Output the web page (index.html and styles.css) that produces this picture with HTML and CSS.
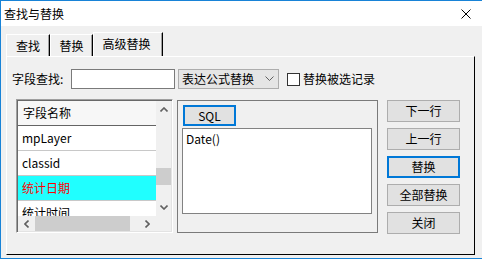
FILE: index.html
```html
<!DOCTYPE html>
<html>
<head>
    <title>查找与替换</title>
    <link rel="stylesheet" href="styles.css">
</head>
<body>
    <div class="window">
        <div class="titlebar">
            <span class="title">查找与替换</span>
            <svg class="close" width="10" height="10" viewBox="0 0 10 10">
                <path d="M0.5 0.5 L9.5 9.5 M9.5 0.5 L0.5 9.5" stroke="#000" stroke-width="1" fill="none"/>
            </svg>
        </div>
        <div class="client">
            <div class="tabs">
                <div class="tab tab-find">查找</div>
                <div class="tab tab-replace">替换</div>
                <div class="tab tab-adv active">高级替换</div>
            </div>
            <div class="panel">
                <div class="search-row">
                    <label class="search-label">字段查找:</label>
                    <div class="text-input"></div>
                    <div class="combo">
                        <span>表达公式替换</span>
                        <svg width="9" height="6" viewBox="0 0 9 6">
                            <path d="M0.5 0.5 L4.5 4.5 L8.5 0.5" stroke="#606060" stroke-width="1" fill="none"/>
                        </svg>
                    </div>
                    <label class="check"><span class="box"></span>替换被选记录</label>
                </div>

                <div class="main-row">
                    <div class="listbox">
                        <div class="list-body">
                            <div class="list-rows">
                                <div class="list-head">字段名称</div>
                                <div class="list-item">mpLayer</div>
                                <div class="list-item">classid</div>
                                <div class="list-item selected">统计日期</div>
                                <div class="list-item">统计时间</div>
                            </div>
                            <div class="vscroll">
                                <div class="arrow">
                                    <svg width="8" height="5" viewBox="0 0 8 5"><path d="M0.5 4.5 L4 1 L7.5 4.5" stroke="#606060" stroke-width="1.6" fill="none"/></svg>
                                </div>
                                <div class="track"><div class="vthumb"></div></div>
                                <div class="arrow">
                                    <svg width="8" height="5" viewBox="0 0 8 5"><path d="M0.5 0.5 L4 4 L7.5 0.5" stroke="#606060" stroke-width="1.6" fill="none"/></svg>
                                </div>
                            </div>
                        </div>
                        <div class="hscroll-row">
                            <div class="hscroll">
                                <div class="harrow">
                                    <svg width="5" height="8" viewBox="0 0 5 8"><path d="M4.5 0.5 L1 4 L4.5 7.5" stroke="#606060" stroke-width="1.6" fill="none"/></svg>
                                </div>
                                <div class="htrack"><div class="hthumb"></div></div>
                                <div class="harrow">
                                    <svg width="5" height="8" viewBox="0 0 5 8"><path d="M0.5 0.5 L4 4 L0.5 7.5" stroke="#606060" stroke-width="1.6" fill="none"/></svg>
                                </div>
                            </div>
                            <div class="corner"></div>
                        </div>
                    </div>

                    <div class="expr-group">
                        <div class="btn focused sql">SQL</div>
                        <div class="expr-text">Date()</div>
                    </div>

                    <div class="actions">
                        <div class="btn">下一行</div>
                        <div class="btn">上一行</div>
                        <div class="btn focused">替换</div>
                        <div class="btn">全部替换</div>
                        <div class="btn">关闭</div>
                    </div>
                </div>
            </div>
        </div>
    </div>
</body>
</html>
```

FILE: styles.css
```css
body {
    margin: 0;
    background: #f0f0f0;
    font-family: "Noto Sans CJK SC", "Noto Sans", sans-serif;
    font-size: 12px;
    color: #000;
}
.window {
    width: 482px;
    height: 259px;
    box-sizing: border-box;
    border-top: 1px solid #1883d7;
    border-left: 1px solid #1883d7;
    border-bottom: 1px solid #1883d7;
    background: #f0f0f0;
}
.titlebar {
    height: 25px;
    background: #fff;
    display: flex;
    align-items: center;
    justify-content: space-between;
    padding: 0 11px 0 3px;
}
.title {
    line-height: 16px;
}
.close {
    display: block;
}
.client {
    height: 232px;
    display: flex;
    flex-direction: column;
}
.tabs {
    display: flex;
    align-items: flex-end;
    margin: 6px 0 0 5px;
    height: 24px;
}
.tab {
    box-sizing: border-box;
    height: 22px;
    line-height: 22px;
    text-align: center;
    border-top: 1px solid #fff;
    border-left: 1px solid #fff;
    border-right: 1px solid #000;
    box-shadow: inset -1px 0 #a0a0a0;
    padding-top: 2px;
    line-height: 18px;
}
.tab-find { width: 44px; }
.tab-replace { width: 43px; }
.tab-adv { width: 70px; }
.tab.active {
    height: 24px;
    padding-top: 1px;
    padding-right: 3px;
    line-height: 20px;
}
.panel {
    box-sizing: border-box;
    width: 469px;
    height: 199px;
    margin-left: 5px;
    border-top: 1px solid #fff;
    border-left: 1px solid #fff;
    border-right: 1px solid #000;
    border-bottom: 1px solid #000;
    padding: 12px 0 0 5px;
}
.search-row {
    display: flex;
    align-items: center;
    height: 20px;
}
.search-label {
    width: 59px;
    line-height: 16px;
}
.text-input {
    box-sizing: border-box;
    width: 104px;
    height: 20px;
    background: #fff;
    border: 1px solid #7a7a7a;
}
.combo {
    box-sizing: border-box;
    width: 101px;
    height: 20px;
    margin-left: 3px;
    background: #e5e5e5;
    border: 1px solid #adadad;
    display: flex;
    align-items: center;
    justify-content: space-between;
    padding: 0 4px 0 3px;
    line-height: 16px;
}
.combo svg {
    display: block;
}
.check {
    display: flex;
    align-items: center;
    margin-left: 8px;
    line-height: 16px;
}
.box {
    box-sizing: border-box;
    width: 13px;
    height: 13px;
    border: 1px solid #333;
    background: #fff;
    margin-right: 3px;
}
.main-row {
    display: flex;
    align-items: flex-start;
    margin-top: 10px;
    padding-left: 4px;
}
.listbox {
    box-sizing: border-box;
    width: 157px;
    height: 134px;
    border: 1px solid;
    border-color: #a0a0a0 #fff #fff #a0a0a0;
    box-shadow: inset 1px 1px #696969, inset -1px -1px #e3e3e3;
    padding: 1px;
    display: flex;
    flex-direction: column;
}
.list-body {
    display: flex;
    height: 115px;
}
.list-rows {
    width: 138px;
    overflow: hidden;
    background: #fff;
}
.list-head {
    box-sizing: border-box;
    height: 25px;
    line-height: 24px;
    padding-left: 5px;
    background: #f7f7f7;
    border-bottom: 1px solid #646464;
}
.list-item {
    box-sizing: border-box;
    height: 25px;
    line-height: 24px;
    padding-left: 4px;
    border-bottom: 1px solid #c8c8c8;
}
.list-item.selected {
    background: #20ffff;
    color: #ff0000;
}
.vscroll {
    width: 15px;
    display: flex;
    flex-direction: column;
    background: #f0f0f0;
}
.arrow {
    height: 17px;
    display: flex;
    align-items: center;
    justify-content: center;
}
.arrow svg, .harrow svg {
    display: block;
}
.track {
    flex: 1;
}
.vthumb {
    height: 17px;
    margin-top: 50px;
    background: #cdcdcd;
}
.hscroll-row {
    display: flex;
    height: 15px;
}
.hscroll {
    width: 138px;
    display: flex;
    background: #f0f0f0;
}
.harrow {
    width: 17px;
    display: flex;
    align-items: center;
    justify-content: center;
}
.htrack {
    flex: 1;
}
.hthumb {
    width: 95px;
    height: 15px;
    background: #cdcdcd;
}
.corner {
    width: 15px;
    background: #f0f0f0;
}
.expr-group {
    box-sizing: border-box;
    width: 201px;
    height: 133px;
    margin: 1px 0 0 4px;
    border: 1px solid #7a7a7a;
    padding: 4px 0 0 4px;
}
.btn {
    box-sizing: border-box;
    height: 22px;
    background: #e1e1e1;
    border: 1px solid #adadad;
    text-align: center;
    line-height: 20px;
}
.btn.focused {
    border: 2px solid #0078d7;
    line-height: 18px;
}
.sql {
    width: 53px;
    height: 21px;
    margin-left: 1px;
    line-height: 17px;
}
.expr-text {
    box-sizing: border-box;
    width: 190px;
    height: 86px;
    margin-top: 2px;
    background: #fff;
    border: 1px solid #828282;
    padding: 2px 3px;
    line-height: 16px;
}
.actions {
    width: 73px;
    margin: 1px 0 0 9px;
    display: flex;
    flex-direction: column;
    gap: 6px;
}
```
